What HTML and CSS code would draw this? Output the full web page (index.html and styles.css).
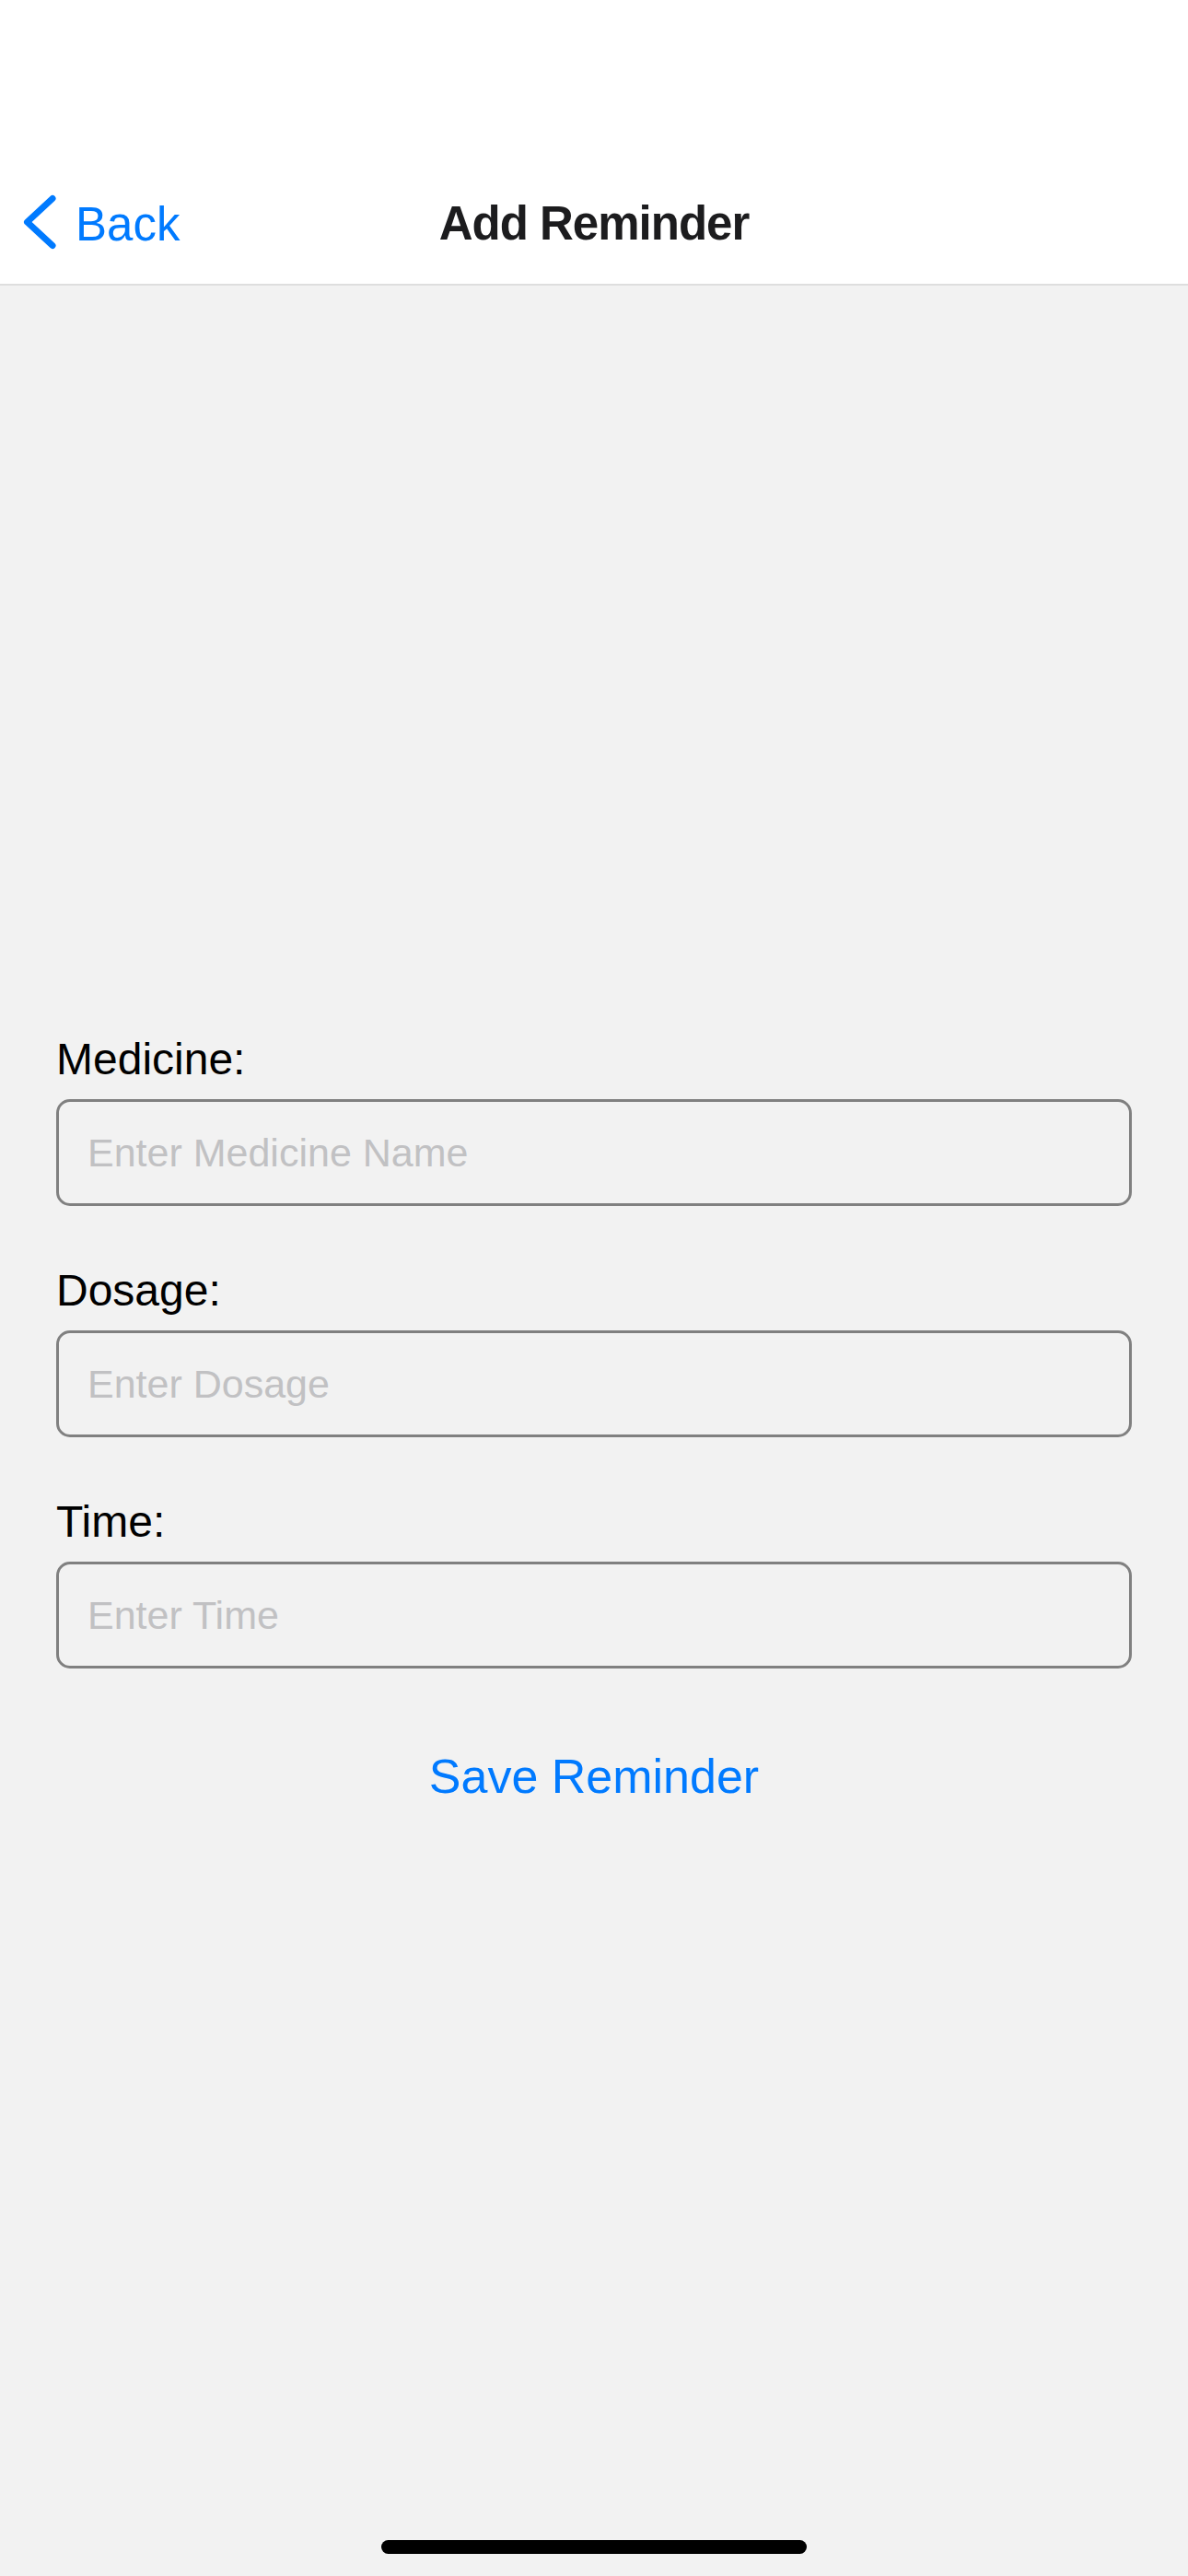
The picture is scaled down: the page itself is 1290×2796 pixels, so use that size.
FILE: index.html
```html
<!DOCTYPE html>
<html lang="en">
<head>
<meta charset="utf-8">
<title>Add Reminder</title>
<link rel="stylesheet" href="styles.css">
</head>
<body>
<div class="screen">
  <header class="header">
    <div class="navbar">
      <div class="nav-left">
        <a class="back" href="#">
          <svg class="chevron" width="44" height="68" viewBox="0 0 44 68" aria-hidden="true">
            <path d="M37 8.5 L9.5 34 L37 59.5" fill="none" stroke="#007aff" stroke-width="7" stroke-linecap="round" stroke-linejoin="round"/>
          </svg>
          <span class="back-label">Back</span>
        </a>
      </div>
      <h1 class="title">Add Reminder</h1>
      <div class="nav-right"></div>
    </div>
  </header>

  <main class="main">
    <form class="form">
      <div class="field">
        <label class="label" for="medicine">Medicine:</label>
        <input class="input" id="medicine" type="text" placeholder="Enter Medicine Name">
      </div>
      <div class="field">
        <label class="label" for="dosage">Dosage:</label>
        <input class="input" id="dosage" type="text" placeholder="Enter Dosage">
      </div>
      <div class="field">
        <label class="label" for="time">Time:</label>
        <input class="input" id="time" type="text" placeholder="Enter Time">
      </div>
      <button class="save" type="button">Save Reminder</button>
    </form>
  </main>

  <div class="home-wrap">
    <div class="home-indicator"></div>
  </div>
</div>
</body>
</html>
```
FILE: styles.css
```css
* {
  box-sizing: border-box;
}

html, body {
  margin: 0;
  padding: 0;
}

body {
  background: #f2f2f2;
  font-family: "Liberation Sans", Arial, sans-serif;
}

.screen {
  width: 1290px;
  height: 2796px;
  display: flex;
  flex-direction: column;
  background: #f2f2f2;
}

.header {
  background: #ffffff;
  height: 310px;
  padding-top: 176px;
  border-bottom: 2px solid #dedede;
}

.navbar {
  height: 132px;
  display: grid;
  grid-template-columns: 1fr auto 1fr;
  align-items: center;
}

.nav-left {
  display: flex;
  align-items: center;
  padding-left: 20px;
}

.back {
  display: flex;
  align-items: center;
  text-decoration: none;
  color: #007aff;
}

.chevron {
  display: block;
  margin-top: -2px;
}

.back-label {
  margin-left: 18px;
  font-size: 51px;
  line-height: 60px;
  padding-top: 4px;
}

.title {
  margin: 0;
  font-size: 51px;
  line-height: 60px;
  font-weight: 700;
  letter-spacing: -1px;
  color: #1c1c1e;
  padding-top: 2px;
}

.main {
  flex: 1;
  padding: 811px 61px 0 61px;
}

.form {
  display: flex;
  flex-direction: column;
  margin: 0;
}

.field {
  display: flex;
  flex-direction: column;
  margin-bottom: 63px;
}

.field:last-of-type {
  margin-bottom: 86px;
}

.label {
  font-size: 48px;
  line-height: 58px;
  color: #000000;
  margin-bottom: 14px;
}

.input {
  width: 1168px;
  height: 116px;
  border: 3px solid #808080;
  border-radius: 15px;
  background: #f2f2f2;
  padding: 0 28px 0 31px;
  font-family: "Liberation Sans", Arial, sans-serif;
  font-size: 43px;
  color: #000000;
  outline: none;
  margin: 0;
}

.input::placeholder {
  color: #c1c1c3;
}

.save {
  align-self: center;
  border: none;
  background: none;
  padding: 0;
  font-family: "Liberation Sans", Arial, sans-serif;
  font-size: 52px;
  line-height: 62px;
  color: #007aff;
  cursor: pointer;
}

.home-wrap {
  display: flex;
  justify-content: center;
  padding-bottom: 24px;
}

.home-indicator {
  width: 462px;
  height: 15px;
  border-radius: 8px;
  background: #000000;
}
```
